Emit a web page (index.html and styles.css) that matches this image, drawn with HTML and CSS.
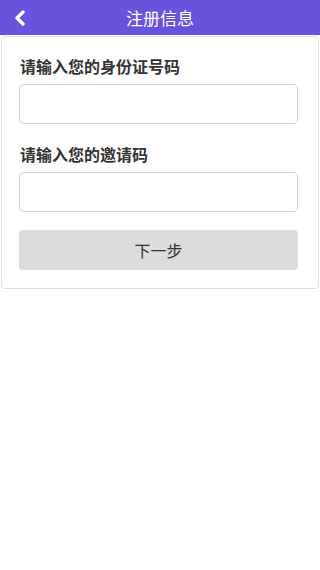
FILE: index.html
```html
<!DOCTYPE html>
<html lang="zh">
<head>
<meta charset="utf-8">
<title>注册信息</title>
<link rel="stylesheet" href="styles.css">
</head>
<body>
<header class="topbar">
  <a class="back" href="#" aria-label="返回">
    <svg width="14" height="16" viewBox="0 0 14 16"><path d="M10 2 L4 8 L10 14" fill="none" stroke="#fff" stroke-width="3.4" stroke-linecap="round" stroke-linejoin="round"/></svg>
  </a>
  <h1 class="title">注册信息</h1>
</header>
<main class="card">
  <label class="label" for="idno">请输入您的身份证号码</label>
  <input class="field" id="idno" type="text">
  <label class="label second" for="invite">请输入您的邀请码</label>
  <input class="field" id="invite" type="text">
  <button class="next" type="button">下一步</button>
</main>
</body>
</html>
```
FILE: styles.css
```css
* { box-sizing: border-box; }
html, body { margin: 0; padding: 0; background: #fff; }
body {
  font-family: "Noto Sans CJK SC", "Noto Sans", "Liberation Sans", sans-serif;
  color: #333;
}
.topbar {
  position: relative;
  height: 35px;
  background: #6a53dc;
  display: flex;
  align-items: center;
  justify-content: center;
}
.back {
  position: absolute;
  left: 13px;
  top: 10px;
  display: flex;
}
.title {
  margin: 0;
  font-size: 17px;
  font-weight: normal;
  color: #fff;
  line-height: 35px;
}
.card {
  margin: 1px 1px 0;
  border: 1px solid #dedede;
  border-radius: 4px;
  padding: 18px 17px 18px 17px;
  display: flex;
  flex-direction: column;
}
.label {
  font-size: 16px;
  font-weight: bold;
  line-height: 22px;
  color: #333;
  padding-left: 1px;
  margin-bottom: 7px;
}
.label.second { margin-top: 19px; }
.field {
  height: 40px;
  margin: 0;
  border: 1px solid #cfcfcf;
  border-radius: 5px;
  background: #fff;
  font-size: 15px;
  padding: 0 10px;
  outline: none;
  width: 279px;
}
.next {
  margin: 18px 0 0;
  height: 40px;
  width: 279px;
  border: none;
  border-radius: 4px;
  background: #dcdcdc;
  color: #333;
  font-family: inherit;
  font-size: 16px;
  cursor: pointer;
}
```
